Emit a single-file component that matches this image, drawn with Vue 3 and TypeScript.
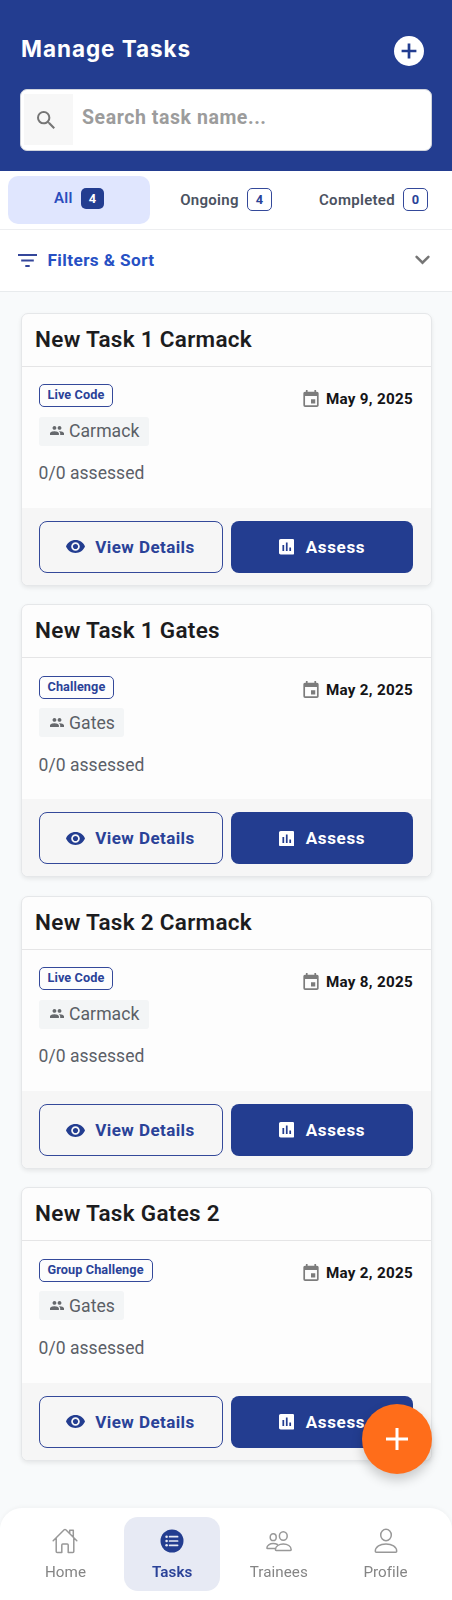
<script setup lang="ts">
import { ref } from 'vue'

interface Task {
  title: string
  kind: string
  group: string
  assessed: string
  due: string
}

const tabs = [
  { label: 'All', count: 4 },
  { label: 'Ongoing', count: 4 },
  { label: 'Completed', count: 0 },
]
const activeTab = ref('All')
const query = ref('')

const tasks: Task[] = [
  { title: 'New Task 1 Carmack', kind: 'Live Code', group: 'Carmack', assessed: '0/0 assessed', due: 'May 9, 2025' },
  { title: 'New Task 1 Gates', kind: 'Challenge', group: 'Gates', assessed: '0/0 assessed', due: 'May 2, 2025' },
  { title: 'New Task 2 Carmack', kind: 'Live Code', group: 'Carmack', assessed: '0/0 assessed', due: 'May 8, 2025' },
  { title: 'New Task Gates 2', kind: 'Group Challenge', group: 'Gates', assessed: '0/0 assessed', due: 'May 2, 2025' },
]
</script>

<template>
  <div class="page">
    <header class="header">
      <div class="title-row">
        <h1 class="title">Manage Tasks</h1>
        <button class="add" aria-label="Add task">
          <svg viewBox="0 0 30 30" width="30" height="30">
            <circle cx="15" cy="15" r="15" fill="#fff" />
            <path d="M15 7.6v14.8M7.6 15h14.8" stroke="#233d90" stroke-width="2.7" />
          </svg>
        </button>
      </div>
      <div class="search">
        <span class="search-icon">
          <svg viewBox="3 3 17.5 17.5" width="18" height="18">
            <path fill="#757575" d="M15.5 14h-.79l-.28-.27A6.47 6.47 0 0 0 16 9.5 6.5 6.5 0 1 0 9.5 16c1.61 0 3.09-.59 4.23-1.57l.27.28v.79l5 4.99L20.49 19l-4.99-5zm-6 0C7.01 14 5 11.99 5 9.5S7.01 5 9.5 5 14 7.01 14 9.5 11.99 14 9.5 14z" />
          </svg>
        </span>
        <input v-model="query" class="search-input" placeholder="Search task name..." />
      </div>
    </header>

    <nav class="tabs">
      <button
        v-for="tab in tabs"
        :key="tab.label"
        class="tab"
        :class="{ active: tab.label === activeTab }"
        @click="activeTab = tab.label"
      >
        <span>{{ tab.label }}</span>
        <span class="count">{{ tab.count }}</span>
      </button>
    </nav>

    <div class="filters">
      <svg class="filter-icon" viewBox="0 0 19 13" width="19" height="13">
        <path d="M0 1.1h19M3.2 6.5h12.6M7.3 11.9h4.4" stroke="#34469a" stroke-width="2" />
      </svg>
      <span class="filters-label">Filters &amp; Sort</span>
      <svg class="chevron" viewBox="0 0 15 10" width="15" height="10">
        <path d="M1.6 1.8 7.5 7.7l5.9-5.9" fill="none" stroke="#757575" stroke-width="2.5" stroke-linecap="round" />
      </svg>
    </div>

    <main class="list">
      <article v-for="task in tasks" :key="task.title" class="card">
        <h2 class="card-title">{{ task.title }}</h2>
        <div class="card-body">
          <div class="info">
            <span class="kind">{{ task.kind }}</span>
            <span class="group">
              <svg viewBox="1 5 22 14" width="14" height="9">
                <path fill="#66696d" d="M16 11c1.66 0 2.99-1.34 2.99-3S17.66 5 16 5s-3 1.34-3 3 1.34 3 3 3zm-8 0c1.66 0 2.99-1.34 2.99-3S9.66 5 8 5 5 6.34 5 8s1.34 3 3 3zm0 2c-2.33 0-7 1.17-7 3.5V19h14v-2.5c0-2.33-4.67-3.5-7-3.5zm8 0c-.29 0-.62.02-.97.05 1.16.84 1.97 1.97 1.97 3.45V19h6v-2.5c0-2.33-4.67-3.5-7-3.5z" />
              </svg>
              <span>{{ task.group }}</span>
            </span>
            <span class="assessed">{{ task.assessed }}</span>
          </div>
          <div class="due">
            <svg viewBox="3 1 18 20" width="16" height="17">
              <path fill="#7c7c7c" d="M17 12h-5v5h5v-5zM16 1v2H8V1H6v2H5c-1.11 0-1.99.9-1.99 2L3 19a2 2 0 0 0 2 2h14c1.1 0 2-.9 2-2V5c0-1.1-.9-2-2-2h-1V1h-2zm3 18H5V8h14v11z" />
            </svg>
            <span>{{ task.due }}</span>
          </div>
        </div>
        <footer class="actions">
          <button class="btn outline">
            <svg viewBox="1 4.5 22 15" width="19" height="13">
              <path fill="#233d90" d="M12 4.5C7 4.5 2.73 7.61 1 12c1.73 4.39 6 7.5 11 7.5s9.27-3.11 11-7.5c-1.73-4.39-6-7.5-11-7.5zM12 17c-2.76 0-5-2.24-5-5s2.24-5 5-5 5 2.24 5 5-2.24 5-5 5zm0-8c-1.66 0-3 1.34-3 3s1.34 3 3 3 3-1.34 3-3-1.34-3-3-3z" />
            </svg>
            <span>View Details</span>
          </button>
          <button class="btn solid">
            <svg viewBox="3 3 18 18" width="15.5" height="15.5">
              <path fill="#fff" d="M19 3H5c-1.1 0-2 .9-2 2v14c0 1.1.9 2 2 2h14c1.1 0 2-.9 2-2V5c0-1.1-.9-2-2-2zM9 17H7v-7h2v7zm4 0h-2V7h2v10zm4 0h-2v-4h2v4z" />
            </svg>
            <span>Assess</span>
          </button>
        </footer>
      </article>
    </main>

    <button class="fab" aria-label="New task">
      <svg viewBox="0 0 22 22" width="22" height="22">
        <path d="M11 0v22M0 11h22" stroke="#fff" stroke-width="3" />
      </svg>
    </button>

    <nav class="bottom-nav">
      <a class="nav-item">
        <svg viewBox="0 0 26 26" width="26" height="26" class="line-icon">
          <path d="M1.2 12.7 12.2 1.8a1.2 1.2 0 0 1 1.6 0l11 10.9M4.2 10v13.5c0 .6.4 1 1 1h4.6v-7.6c0-.6.4-1 1-1h4.4c.6 0 1 .4 1 1v7.6h4.6c.6 0 1-.4 1-1V10M17.7 5.5V2.3h3.6v6.8" />
        </svg>
        <span>Home</span>
      </a>
      <a class="nav-item current">
        <svg viewBox="0 0 26 26" width="26" height="26">
          <circle cx="13" cy="13" r="11.5" fill="#233d90" />
          <g stroke="#e7eaf4" stroke-width="1.7" stroke-linecap="round">
            <path d="M10.6 8.7h8M10.6 13h8M10.6 17.3h8" />
          </g>
          <g fill="#e7eaf4">
            <circle cx="7.6" cy="8.7" r="1.3" />
            <circle cx="7.6" cy="13" r="1.3" />
            <circle cx="7.6" cy="17.3" r="1.3" />
          </g>
        </svg>
        <span>Tasks</span>
      </a>
      <a class="nav-item">
        <svg viewBox="0 0 26 26" width="26" height="26" class="line-icon">
          <ellipse cx="17.3" cy="8" rx="3.9" ry="4.3" />
          <path d="M9.4 21.7c0-3.6 3.7-5.7 7.9-5.7s7.9 2.100 7.9 5.7c0 .4-.3.7-.8.7H10.200c-.5 0-.8-.3-.8-.7z" />
          <ellipse cx="7.2" cy="9.200" rx="3" ry="3.4" />
          <path d="M11.4 16.500c-1.200-.6-2.700-.9-4.200-.9-3.400 0-6.300 1.700-6.300 4.300 0 .4.300.7.7.7h7.600" />
        </svg>
        <span>Trainees</span>
      </a>
      <a class="nav-item">
        <svg viewBox="0 0 26 26" width="26" height="26" class="line-icon">
          <ellipse cx="13" cy="7" rx="5.3" ry="5.7" />
          <path d="M2.3 23.3c0-4.8 4.8-7.4 10.7-7.4s10.7 2.6 10.7 7.4c0 .6-.4 1-1 1H3.3c-.6 0-1-.4-1-1z" />
        </svg>
        <span>Profile</span>
      </a>
    </nav>
  </div>
</template>

<style>
body {
  background: #f8fafb;
}
</style>

<style scoped>
.page {
  box-sizing: border-box;
  min-height: 1600px;
  background: #f8fafb;
  font-family: Roboto, "Liberation Sans", sans-serif;
  color: #1c1c1e;
}
.page * {
  box-sizing: border-box;
}
button {
  border: 0;
  padding: 0;
  background: none;
  font-family: inherit;
}
svg {
  display: block;
  flex: none;
}
.header {
  height: 170.5px;
  padding: 32px 20px 0;
  background: #233d90;
}
.title-row {
  display: flex;
  align-items: center;
  justify-content: space-between;
  height: 37px;
  padding-right: 8px;
}
.title {
  margin: 0;
  padding: 0 0 3px 1px;
  font: 700 22.5px/34px Inter, "Open Sans", sans-serif;
  letter-spacing: 0.95px;
  color: #fff;
}
.search {
  display: flex;
  align-items: center;
  height: 61.5px;
  margin-top: 20px;
  padding: 0 5px 0 3px;
  border: 1px solid #cfd3dc;
  border-radius: 7px;
  background: #fff;
}
.search-icon {
  display: flex;
  align-items: center;
  justify-content: center;
  width: 49px;
  height: 51px;
  padding-right: 5px;
  background: #f7f7f7;
}
.search-input {
  flex: 1;
  min-width: 0;
  height: 50px;
  margin-bottom: 5px;
  padding: 0 0 0 9px;
  border: 0;
  outline: 0;
  background: none;
  font: 700 19.5px Roboto, sans-serif;
  letter-spacing: 0.56px;
}
.search-input::placeholder {
  color: #9c9c9c;
}
.tabs {
  display: grid;
  grid-template-columns: 142px 1fr 1fr;
  align-items: center;
  height: 59px;
  padding: 0 8px;
  border-bottom: 1.5px solid #edeef0;
  background: #fff;
}
.tab {
  display: flex;
  align-items: center;
  justify-content: center;
  gap: 8px;
  height: 48px;
  border-radius: 10px;
  font-size: 15px;
  font-weight: 600;
  letter-spacing: 0.3px;
  color: #4b5261;
}
.tab:nth-child(2) {
  padding-left: 5px;
}
.tab:nth-child(3) {
  padding-left: 6px;
}
.tab.active {
  background: #e0e6fe;
  color: #2b4dbd;
  padding-bottom: 3px;
}
.count {
  display: flex;
  align-items: center;
  justify-content: center;
  width: 25px;
  height: 23px;
  border: 1px solid #34499a;
  border-radius: 5px;
  font-size: 12.8px;
  font-weight: 700;
  letter-spacing: 0;
  color: #2a4298;
}
.active .count {
  width: 23.5px;
  height: 21px;
  border: 0;
  background: #233d90;
  color: #fff;
}
.filters {
  display: flex;
  align-items: center;
  height: 62.5px;
  padding: 0 22.5px 0 18px;
  border-bottom: 1.5px solid #e8ebed;
  background: #fff;
}
.filters-label {
  flex: 1;
  margin-left: 10.5px;
  font-size: 17.2px;
  font-weight: 700;
  letter-spacing: 0.4px;
  color: #2650c4;
}
.list {
  display: flex;
  flex-direction: column;
  gap: 18.34px;
  padding: 20.5px 20.5px 0;
}
.card {
  display: flex;
  flex-direction: column;
  height: 273.33px;
  border: 1.5px solid #e5e7e9;
  border-radius: 7px;
  background: #fdfdfd;
  box-shadow: 0 2px 4px rgba(0, 0, 0, 0.08);
  overflow: hidden;
}
.card-title {
  flex: none;
  height: 53px;
  margin: 0;
  padding: 0 13.5px;
  border-bottom: 1.5px solid #e5e5e6;
  font-size: 22.5px;
  line-height: 50.5px;
  font-weight: 600;
  letter-spacing: 0.3px;
  color: #1c1c1e;
}
.card-body {
  display: flex;
  flex: 1;
  justify-content: space-between;
  padding: 17.5px 17.5px 0 17px;
}
.info {
  display: flex;
  flex-direction: column;
  align-items: flex-start;
}
.kind {
  height: 23px;
  padding: 0 8px;
  border: 1px solid #34499a;
  border-radius: 5px;
  font-size: 12.7px;
  line-height: 20.5px;
  font-weight: 700;
  letter-spacing: 0.1px;
  color: #2a4298;
}
.group {
  display: flex;
  align-items: center;
  gap: 5.5px;
  height: 29px;
  margin-top: 9.5px;
  padding: 0 9.5px 0 11px;
  border-radius: 3px;
  background: #f3f5f6;
  font-size: 17.6px;
  line-height: 29px;
  letter-spacing: 0.05px;
  color: #5b5f66;
}
.group span {
  padding-top: 1px;
}
.group svg {
  margin-top: -1px;
}
.assessed {
  margin-top: 17.5px;
  font-size: 17.5px;
  line-height: 21px;
  letter-spacing: 0.05px;
  color: #5b6068;
}
.due {
  display: flex;
  align-items: center;
  gap: 7px;
  height: 20px;
  margin-top: 4.5px;
  font-size: 15.2px;
  font-weight: 700;
  letter-spacing: 0.3px;
  color: #141416;
}
.due svg {
  margin-top: -1px;
}
.actions {
  display: flex;
  flex: none;
  gap: 8.5px;
  height: 77px;
  padding: 13px 17.5px 0 17px;
  background: #f6f6f6;
}
.btn {
  display: flex;
  flex: 1;
  align-items: center;
  justify-content: center;
  height: 52px;
  border-radius: 8px;
  font-size: 17px;
  font-weight: 700;
}
.outline {
  gap: 10px;
  border: 1px solid #34499a;
  letter-spacing: 0.42px;
  color: #2a4298;
}
.solid {
  gap: 11.5px;
  background: #233d90;
  letter-spacing: 0.65px;
  color: #fff;
}
.fab {
  position: fixed;
  right: 20px;
  bottom: 126px;
  display: flex;
  align-items: center;
  justify-content: center;
  width: 70px;
  height: 70px;
  border-radius: 50%;
  background: #ff6d1a;
  box-shadow: 0 6px 12px rgba(0, 0, 0, 0.2);
}
.bottom-nav {
  position: fixed;
  right: 0;
  bottom: 0;
  left: 0;
  display: grid;
  grid-template-columns: repeat(4, 96px);
  justify-content: center;
  gap: 10.7px;
  height: 92px;
  padding: 9px 1px 0 0;
  border-radius: 22px 22px 0 0;
  background: #fff;
  box-shadow: 0 -1px 4px rgba(0, 0, 0, 0.04);
}
.nav-item {
  display: flex;
  flex-direction: column;
  align-items: center;
  height: 74px;
  padding-top: 11px;
  border-radius: 14px;
  font-size: 15.2px;
  line-height: 20px;
  letter-spacing: 0.05px;
  color: #858585;
}
.nav-item span {
  margin-top: 8px;
}
.current {
  background: #e7eaf4;
  font-weight: 600;
  color: #2a4298;
}
.line-icon {
  fill: none;
  stroke: #989898;
  stroke-width: 1.5;
  stroke-linecap: round;
  stroke-linejoin: round;
}
</style>
